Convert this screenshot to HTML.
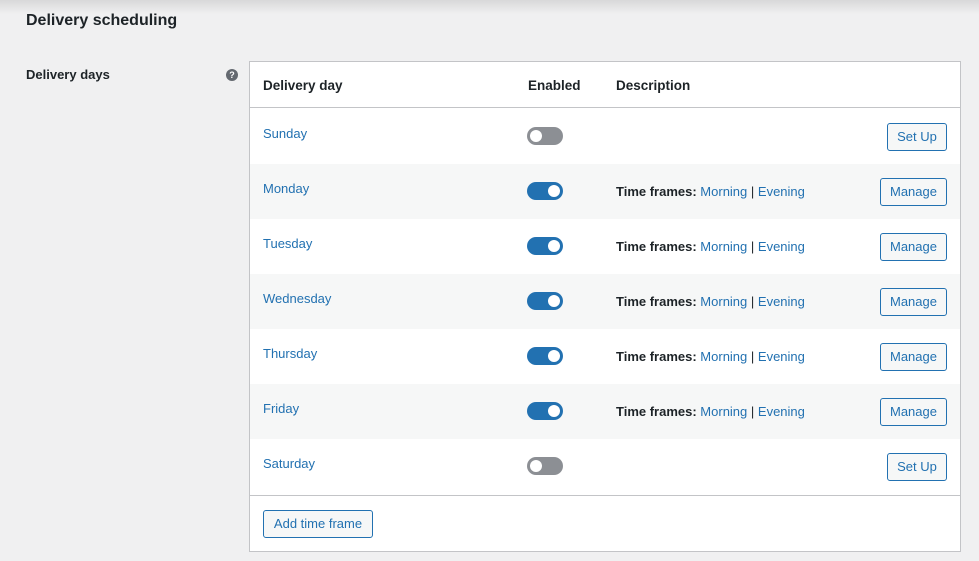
<!DOCTYPE html>
<html><head><style>
*{box-sizing:border-box;margin:0;padding:0}
body{width:979px;height:561px;background:#f0f0f1;font-family:"Liberation Sans",sans-serif;color:#1d2327;position:relative;overflow:hidden}
.shadow{position:absolute;left:0;top:0;width:979px;height:14px;background:linear-gradient(#d8d8d9,#f0f0f1)}
.abs{position:absolute}
h2{position:absolute;left:26px;top:12px;font-size:16px;font-weight:bold}
.lbl{position:absolute;left:26px;top:67px;font-size:13px;font-weight:bold}
.help{position:absolute;left:226px;top:69px;width:12px;height:12px;border-radius:50%;background:#646970;color:#fff;font-size:9px;font-weight:bold;text-align:center;line-height:12px}
.tbl{position:absolute;left:249px;top:61px;width:712px;height:491px;background:#fff;border:1px solid #c3c4c7}
.th{position:absolute;top:16px;font-size:13.5px;font-weight:bold}
.hdr{position:absolute;left:0;top:0;width:100%;height:46px;border-bottom:1px solid #c3c4c7}
.row{position:absolute;left:0;width:100%;height:55px}
.row.alt{background:#f6f7f7}
.day{position:absolute;left:13px;top:17px;font-size:13px;color:#2271b1}
.tg{position:absolute;left:277px;top:18px;width:36px;height:18px;border-radius:9px;background:#8c8f94}
.tg::after{content:"";position:absolute;left:3px;top:3px;width:12px;height:12px;border-radius:50%;background:#fff}
.tg.on{background:#2271b1}
.tg.on::after{left:21px}
.desc{position:absolute;left:366px;top:20px;font-size:13px;color:#2271b1}
.desc b{color:#1d2327}
.desc span{color:#1d2327}
.btn{position:absolute;top:14px;height:28px;border:1px solid #2271b1;border-radius:3px;background:#f6f7f7;color:#2271b1;font-size:13px;line-height:26px;text-align:center}
.su{left:637px;width:60px}
.mg{left:630px;width:67px}
.foot{position:absolute;left:0;top:433px;width:100%;border-top:1px solid #c3c4c7;height:57px}
</style></head><body>
<div class="shadow"></div>
<h2>Delivery scheduling</h2>
<div class="lbl">Delivery days</div>
<div class="help">?</div>
<div class="tbl">
<div class="hdr"><div class="th" style="left:13px">Delivery day</div><div class="th" style="left:278px">Enabled</div><div class="th" style="left:366px">Description</div></div>
<div class="row" style="top:47px"><div class="day">Sunday</div><div class="tg"></div><div class="btn su">Set Up</div></div>
<div class="row alt" style="top:102px"><div class="day">Monday</div><div class="tg on"></div><div class="desc"><b>Time frames:</b> Morning <span>|</span> Evening</div><div class="btn mg">Manage</div></div>
<div class="row" style="top:157px"><div class="day">Tuesday</div><div class="tg on"></div><div class="desc"><b>Time frames:</b> Morning <span>|</span> Evening</div><div class="btn mg">Manage</div></div>
<div class="row alt" style="top:212px"><div class="day">Wednesday</div><div class="tg on"></div><div class="desc"><b>Time frames:</b> Morning <span>|</span> Evening</div><div class="btn mg">Manage</div></div>
<div class="row" style="top:267px"><div class="day">Thursday</div><div class="tg on"></div><div class="desc"><b>Time frames:</b> Morning <span>|</span> Evening</div><div class="btn mg">Manage</div></div>
<div class="row alt" style="top:322px"><div class="day">Friday</div><div class="tg on"></div><div class="desc"><b>Time frames:</b> Morning <span>|</span> Evening</div><div class="btn mg">Manage</div></div>
<div class="row" style="top:377px"><div class="day">Saturday</div><div class="tg"></div><div class="btn su">Set Up</div></div>
<div class="foot"><div class="btn" style="left:13px;top:14px;width:110px">Add time frame</div></div>
</div>
</body></html>
